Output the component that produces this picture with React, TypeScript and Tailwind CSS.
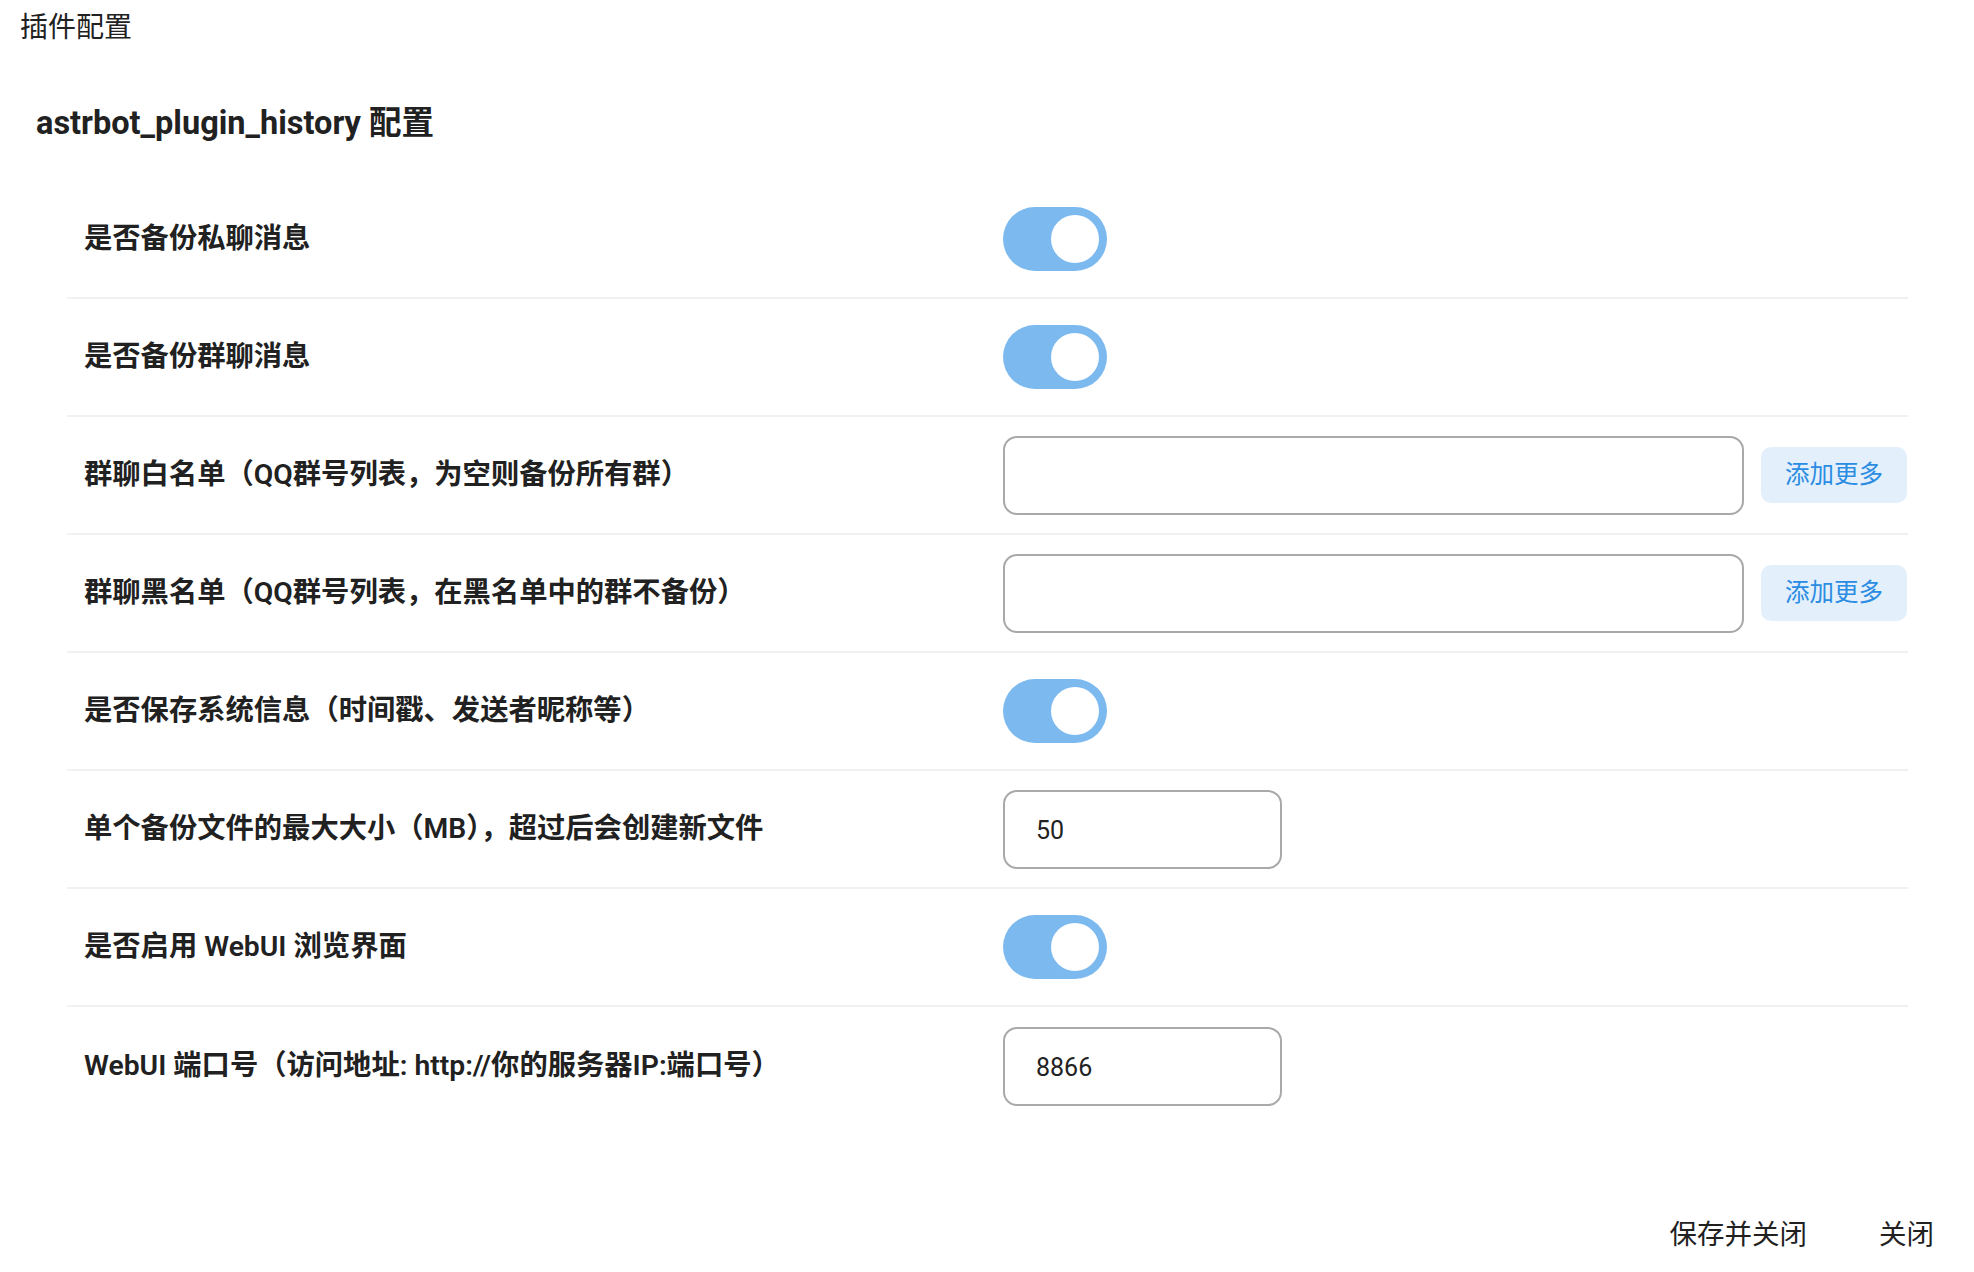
import React from 'react';

type Row =
  | { label: string; kind: 'toggle' }
  | { label: string; kind: 'list' }
  | { label: string; kind: 'number'; value: string };

const rows: Row[] = [
  { label: '是否备份私聊消息', kind: 'toggle' },
  { label: '是否备份群聊消息', kind: 'toggle' },
  { label: '群聊白名单（QQ群号列表，为空则备份所有群）', kind: 'list' },
  { label: '群聊黑名单（QQ群号列表，在黑名单中的群不备份）', kind: 'list' },
  { label: '是否保存系统信息（时间戳、发送者昵称等）', kind: 'toggle' },
  { label: '单个备份文件的最大大小（MB），超过后会创建新文件', kind: 'number', value: '50' },
  { label: '是否启用 WebUI 浏览界面', kind: 'toggle' },
  { label: 'WebUI 端口号（访问地址: http://你的服务器IP:端口号）', kind: 'number', value: '8866' },
];

function Toggle() {
  return (
    <div className="w-[104px] h-[64px] rounded-full bg-[#7cb9ef] flex items-center justify-end pr-[8px]">
      <div className="w-[48px] h-[48px] rounded-full bg-white" />
    </div>
  );
}

function Control({ row }: { row: Row }) {
  if (row.kind === 'toggle') return <Toggle />;
  if (row.kind === 'list') {
    return (
      <div className="flex items-center gap-[17px]">
        <div className="w-[741px] h-[79px] border-2 border-[#a9a9a9] rounded-[14px] bg-white" />
        <button className="w-[146px] h-[56px] rounded-[10px] bg-[#e3f0fc] text-[#2b8ce2] text-[24.5px] leading-none">
          添加更多
        </button>
      </div>
    );
  }
  return (
    <div className="w-[279px] h-[79px] border-2 border-[#a9a9a9] rounded-[14px] bg-white flex items-center pl-[31px] pt-[3px] text-[25px] text-[#222]">
      {row.value}
    </div>
  );
}

export default function App() {
  return (
    <div className="min-h-screen bg-white text-[#212121] font-['Roboto','Noto_Sans_CJK_SC',sans-serif]">
      <div className="px-[20px] pt-[14px] text-[28px] leading-[28px]">插件配置</div>

      <h1 className="mt-[61px] pl-[36px] text-[32.5px] leading-[40px] font-bold">
        astrbot_plugin_history 配置
      </h1>

      <div className="mt-[38px] ml-[67px] mr-[66px]">
        {rows.map((row, i) => (
          <div
            key={row.label}
            className={
              'h-[118px] flex items-center ' +
              (i < rows.length - 1 ? 'border-b-2 border-[#f1f1f1]' : '')
            }
          >
            <div className="w-[936px] pl-[17px] text-[28.3px] font-semibold leading-none">{row.label}</div>
            <Control row={row} />
          </div>
        ))}
      </div>

      <div className="mt-[96px] flex justify-end gap-[72px] pr-[40px] text-[27.5px] leading-[28px]">
        <span>保存并关闭</span>
        <span>关闭</span>
      </div>
    </div>
  );
}
